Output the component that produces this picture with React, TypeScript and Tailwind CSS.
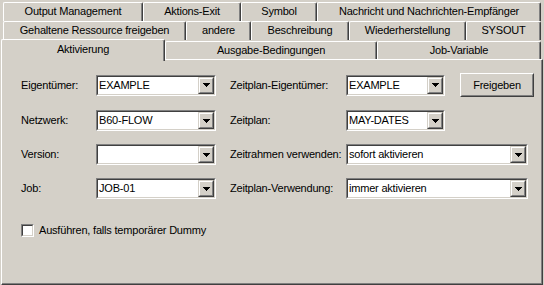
import React from "react";

const FONT = { fontFamily: '"Liberation Sans", Arial, sans-serif' };

function Tab({ label, w, h = 19 }: { label: string; w: number; h?: number }) {
  return (
    <div
      className="flex items-center justify-center border-l border-t border-r border-l-white border-t-white border-r-[#404040] shadow-[inset_-1px_0_0_#808080] rounded-tl-[2px] rounded-tr-[2px] text-[11px] text-black leading-none whitespace-nowrap box-border"
      style={{ width: w, height: h }}
    >
      <span className="-mt-[1px]">{label}</span>
    </div>
  );
}

function Arrow() {
  return (
    <svg width="7" height="4" viewBox="0 0 7 4" shapeRendering="crispEdges">
      <rect x="0" y="0" width="7" height="1" fill="#000" />
      <rect x="1" y="1" width="5" height="1" fill="#000" />
      <rect x="2" y="2" width="3" height="1" fill="#000" />
      <rect x="3" y="3" width="1" height="1" fill="#000" />
    </svg>
  );
}

function Combo({ value, w }: { value: string; w: number }) {
  return (
    <div
      className="h-[21px] border border-t-[#808080] border-l-[#808080] border-b-white border-r-white box-border"
      style={{ width: w }}
    >
      <div className="h-full w-full border border-t-[#404040] border-l-[#404040] border-b-[#d4d0c8] border-r-[#d4d0c8] bg-white flex box-border">
        <div className="flex-1 flex items-center pl-[1px] text-[11px] text-black leading-none whitespace-nowrap overflow-hidden">
          {value}
        </div>
        <div className="w-[16px] h-full border border-t-[#d4d0c8] border-l-[#d4d0c8] border-b-[#404040] border-r-[#404040] bg-[#d4d0c8] box-border">
          <div className="w-full h-full border border-t-white border-l-white border-b-[#808080] border-r-[#808080] flex items-center justify-center box-border">
            <Arrow />
          </div>
        </div>
      </div>
    </div>
  );
}

function Label({ text, w }: { text: string; w: number }) {
  return (
    <div className="text-[11px] text-black leading-none whitespace-nowrap" style={{ width: w }}>
      {text}
    </div>
  );
}

export default function App() {
  return (
    <div className="w-[544px] h-[285px] bg-[#d4d0c8] overflow-hidden flex flex-col tracking-[-0.2px]" style={FONT}>
      {/* Row 1 */}
      <div className="flex pl-[3px] mt-[2px] h-[19px]">
        <Tab label="Output Management" w={140} />
        <Tab label="Aktions-Exit" w={98} />
        <Tab label="Symbol" w={76} />
        <Tab label="Nachricht und Nachrichten-Empfänger" w={224} />
      </div>
      {/* Row 2 */}
      <div className="flex pl-[3px] h-[19px]">
        <Tab label="Gehaltene Ressource freigeben" w={183} />
        <Tab label="andere" w={65} />
        <Tab label="Beschreibung" w={98} />
        <Tab label="Wiederherstellung" w={117} />
        <Tab label="SYSOUT" w={75} />
      </div>
      {/* Row 3 */}
      <div className="flex items-end pl-[1px] h-[19px]">
        <div className="relative z-10 mb-[-2px] w-[164px] h-[22px] flex items-start justify-center pt-[4px] bg-[#d4d0c8] border-l border-t border-r border-l-white border-t-white border-r-[#404040] shadow-[inset_-1px_0_0_#808080] rounded-tl-[2px] rounded-tr-[2px] text-[11px] text-black leading-none box-border">
          Aktivierung
        </div>
        <Tab label="Ausgabe-Bedingungen" w={212} h={18} />
        <Tab label="Job-Variable" w={164} h={18} />
      </div>
      {/* Panel */}
      <div className="ml-[1px] w-[542px] h-[226px] border-l border-t border-r border-b border-l-white border-t-white border-r-[#404040] border-b-[#404040] shadow-[inset_-1px_-1px_0_#808080] box-border pt-[13px] pl-[19px]">
        <div className="flex flex-col gap-[13px]">
          <div className="flex items-center h-[24px]">
            <Label text="Eigentümer:" w={75} />
            <Combo value="EXAMPLE" w={120} />
            <div className="w-[14px]" />
            <Label text="Zeitplan-Eigentümer:" w={116} />
            <Combo value="EXAMPLE" w={99} />
            <div className="w-[15px]" />
            <div className="w-[74px] h-[24px] border border-t-white border-l-white border-b-[#404040] border-r-[#404040] box-border">
              <div className="w-full h-full border border-t-[#d4d0c8] border-l-[#d4d0c8] border-b-[#808080] border-r-[#808080] flex items-center justify-center text-[11px] text-black leading-none box-border">
                Freigeben
              </div>
            </div>
          </div>
          <div className="flex items-center h-[21px]">
            <Label text="Netzwerk:" w={75} />
            <Combo value="B60-FLOW" w={120} />
            <div className="w-[14px]" />
            <Label text="Zeitplan:" w={116} />
            <Combo value="MAY-DATES" w={99} />
          </div>
          <div className="flex items-center h-[21px]">
            <Label text="Version:" w={75} />
            <Combo value="" w={120} />
            <div className="w-[14px]" />
            <Label text="Zeitrahmen verwenden:" w={116} />
            <Combo value="sofort aktivieren" w={182} />
          </div>
          <div className="flex items-center h-[21px]">
            <Label text="Job:" w={75} />
            <Combo value="JOB-01" w={120} />
            <div className="w-[14px]" />
            <Label text="Zeitplan-Verwendung:" w={116} />
            <Combo value="immer aktivieren" w={182} />
          </div>
        </div>
        <div className="flex items-center mt-[25px] h-[13px]">
          <div className="w-[13px] h-[13px] border border-t-[#808080] border-l-[#808080] border-b-white border-r-white box-border">
            <div className="w-full h-full border border-t-[#404040] border-l-[#404040] border-b-[#d4d0c8] border-r-[#d4d0c8] bg-white box-border" />
          </div>
          <div className="ml-[5px] text-[11px] text-black leading-none whitespace-nowrap">
            Ausführen, falls temporärer Dummy
          </div>
        </div>
      </div>
    </div>
  );
}
